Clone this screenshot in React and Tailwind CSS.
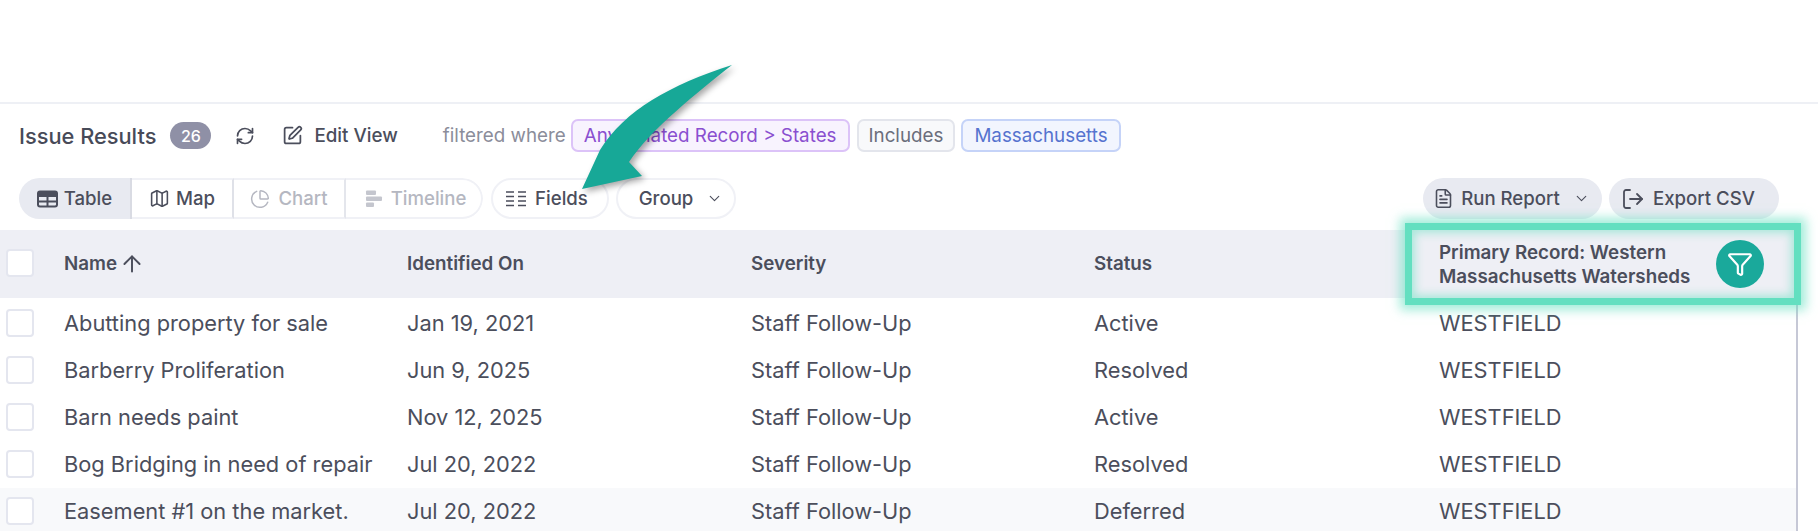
import { RefreshCw, SquarePen, Map, ChartPie, ChevronDown, FileText, LogOut, Funnel, ArrowUp } from 'lucide-react'

const rows = [
  ['Abutting property for sale', 'Jan 19, 2021', 'Staff Follow-Up', 'Active'],
  ['Barberry Proliferation', 'Jun 9, 2025', 'Staff Follow-Up', 'Resolved'],
  ['Barn needs paint', 'Nov 12, 2025', 'Staff Follow-Up', 'Active'],
  ['Bog Bridging in need of repair', 'Jul 20, 2022', 'Staff Follow-Up', 'Resolved'],
  ['Easement #1 on the market.', 'Jul 20, 2022', 'Staff Follow-Up', 'Deferred'],
]

const Checkbox = () => (
  <div className="w-[28px] h-[28px] ml-[6px] mb-[2px] rounded-[4px] border-2 border-[#e4e6ef] bg-white shrink-0" />
)

const TableIcon = () => (
  <svg width="21" height="18" viewBox="0 0 21 18" fill="none" stroke="#4b4e5c" strokeWidth="2">
    <rect x="1" y="1.5" width="19" height="15" rx="2" />
    <path d="M1 4.5h19" strokeWidth="5" />
    <path d="M1 11.5h19M10.5 6v10" />
  </svg>
)

const TimelineIcon = () => (
  <svg width="18" height="20" viewBox="0 0 18 20" fill="#c4c6ce">
    <rect x="1" y="1.5" width="10" height="4.5" rx="1" />
    <rect x="1" y="7.5" width="16" height="4.5" rx="1" />
    <rect x="1" y="13.5" width="8" height="4.5" rx="1" />
  </svg>
)

const FieldsIcon = () => (
  <svg width="20" height="18" viewBox="0 0 20 18" stroke="#4b4e5c" strokeWidth="1.4">
    <path d="M0 2h8M0 6.5h8M0 11h8M0 15.5h8M12 2h8M12 6.5h8M12 11h8M12 15.5h8" />
  </svg>
)

export default function App() {
  return (
    <div className="relative w-[1818px] h-[531px] overflow-hidden bg-white pt-[102px] font-['Inter',sans-serif] text-[#4b4e5c]">
      <div className="border-t-2 border-[#eef0f5]">
        {/* Title bar */}
        <div className="flex items-center h-[33px] mt-[15px] pl-[19px]">
          <h2 className="pt-[2px] text-[21.8px] font-medium text-[#474a58]">Issue Results</h2>
          <span className="ml-[14px] w-[41px] h-[27px] rounded-full bg-[#8f90a6] text-white text-[16px] font-medium flex items-center justify-center">26</span>
          <RefreshCw size={20} strokeWidth={2} className="ml-[24px]" />
          <SquarePen size={21} strokeWidth={2} className="ml-[27px]" />
          <span className="ml-[11px] pt-[2px] text-[18.8px] font-medium">Edit View</span>
          <span className="ml-[45px] pt-[2px] text-[18.8px] text-[#8b8d9a]">filtered where</span>
          <span className="ml-[5px] h-[33px] px-[11px] pt-[2px] flex items-center rounded-[7px] border-2 border-[#dcc3f8] bg-[#f8f3fe] text-[18.8px] text-[#8a4fd0] whitespace-nowrap">Any Related Record &gt; States</span>
          <span className="ml-[7px] h-[33px] px-[10px] pt-[2px] flex items-center rounded-[7px] border-2 border-[#e3e5ec] bg-[#f8f9fb] text-[18.8px] text-[#6b6e7c]">Includes</span>
          <span className="ml-[6px] h-[33px] px-[11px] pt-[2px] flex items-center rounded-[7px] border-2 border-[#c5d3f8] bg-[#f2f5fe] text-[18.8px] text-[#5673cf]">Massachusetts</span>
        </div>

        {/* Toolbar */}
        <div className="flex items-center h-[41px] mt-[26px] px-[19px] text-[18.6px] font-medium">
          <div className="flex h-full rounded-full overflow-hidden">
            <div className="w-[113px] flex items-center justify-center gap-[6px] bg-[#e8eaf1] border-r-2 border-[#d9dbe3]">
              <TableIcon />Table
            </div>
            <div className="w-[102px] flex items-center justify-center gap-[6px] border-y-2 border-r-2 border-y-[#f0f1f6] border-r-[#dfe1e8]">
              <Map size={21} strokeWidth={1.8} />Map
            </div>
            <div className="w-[112px] flex items-center justify-center gap-[8px] border-y-2 border-r-2 border-y-[#f0f1f6] border-r-[#e4e6ec] text-[#b5b7c1]">
              <ChartPie size={20} strokeWidth={1.8} />Chart
            </div>
            <div className="w-[137px] pl-[4px] flex items-center justify-center gap-[8px] rounded-r-full border-y-2 border-r-2 border-[#f0f1f6] text-[#b5b7c1]">
              <TimelineIcon />Timeline
            </div>
          </div>
          <div className="ml-[8px] w-[118px] h-full pr-[6px] flex items-center justify-center gap-[9px] rounded-full border-2 border-[#f0f1f6]">
            <FieldsIcon />Fields
          </div>
          <div className="ml-[7px] w-[120px] h-full pl-[10px] flex items-center justify-center gap-[13px] rounded-full border-2 border-[#f0f1f6]">
            Group<ChevronDown size={17} strokeWidth={1.6} />
          </div>
          <div className="ml-auto mr-[20px] flex h-full gap-[7px]">
            <div className="w-[179px] pr-[2px] flex items-center justify-center gap-[7px] rounded-full bg-[#e8eaf1]">
              <FileText size={21} strokeWidth={1.8} />Run Report<ChevronDown size={17} strokeWidth={1.6} className="ml-[6px]" />
            </div>
            <div className="w-[170px] pr-[12px] flex items-center justify-center gap-[8px] rounded-full bg-[#e8eaf1]">
              <LogOut size={24} strokeWidth={1.8} />Export CSV
            </div>
          </div>
        </div>

        {/* Table */}
        <div className="w-[1798px] mt-[11px] border-r-2 border-[#c6c8d6]">
          <div className="relative grid grid-cols-[64px_343px_344px_343px_345px_1fr] items-center h-[68px] bg-[#eeeff5] text-[18.8px] font-semibold">
            <div className="flex items-center"><Checkbox /></div>
            <div className="flex items-center gap-[2px]">Name<ArrowUp size={26} strokeWidth={1.8} /></div>
            <div>Identified On</div>
            <div>Severity</div>
            <div>Status</div>
            <div className="flex items-center h-full relative">
              <div className="leading-[24px] w-[270px] shrink-0 whitespace-nowrap pt-[2px]">Primary Record: Western<br />Massachusetts Watersheds</div>
              <div className="absolute left-[277px] top-[10px] w-[48px] h-[48px] rounded-full bg-[#1aa99b] flex items-center justify-center">
                <Funnel size={26} strokeWidth={2} className="text-white" />
              </div>
              <div className="absolute -left-[34px] -top-[7px] w-[396px] h-[82px] border-[7px] border-[#63dfc0] shadow-[0_0_10px_5px_rgba(99,223,192,0.6),inset_0_0_9px_3px_rgba(99,223,192,0.5)]" />
            </div>
          </div>
          {rows.map((r, i) => (
            <div key={r[0]} className={`grid grid-cols-[64px_343px_344px_343px_345px_1fr] items-center h-[47px] text-[21.8px] ${i === 4 ? 'bg-[#f8f9fb]' : ''} ${i === 0 ? 'mt-[2px]' : ''}`}>
              <div className="flex items-center"><Checkbox /></div>
              <div className="whitespace-nowrap">{r[0]}</div>
              <div>{r[1]}</div>
              <div>{r[2]}</div>
              <div>{r[3]}</div>
              <div>WESTFIELD</div>
            </div>
          ))}
        </div>
      </div>

      {/* Callout arrow */}
      <svg className="absolute left-0 top-0 pointer-events-none drop-shadow-[3px_3px_3px_rgba(0,0,0,0.35)]" width="1818" height="531">
        <path d="M732 65C670 85 625 110 600 150L582 189L642 176L629 162C650 130 700 90 732 65Z" fill="#17a897" />
      </svg>
    </div>
  )
}
